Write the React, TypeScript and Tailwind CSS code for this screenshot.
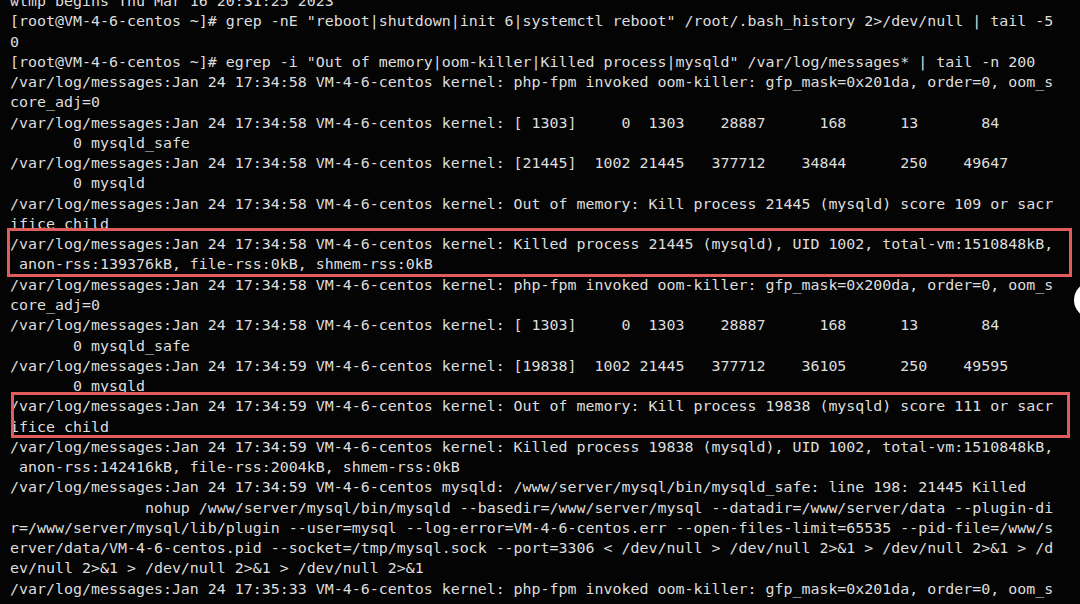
const lines = [
  'wtmp begins Thu Mar 16 20:31:25 2023',
  '[root@VM-4-6-centos ~]# grep -nE "reboot|shutdown|init 6|systemctl reboot" /root/.bash_history 2>/dev/null | tail -5',
  '0',
  '[root@VM-4-6-centos ~]# egrep -i "Out of memory|oom-killer|Killed process|mysqld" /var/log/messages* | tail -n 200',
  '/var/log/messages:Jan 24 17:34:58 VM-4-6-centos kernel: php-fpm invoked oom-killer: gfp_mask=0x201da, order=0, oom_s',
  'core_adj=0',
  '/var/log/messages:Jan 24 17:34:58 VM-4-6-centos kernel: [ 1303]     0  1303    28887      168      13       84',
  '       0 mysqld_safe',
  '/var/log/messages:Jan 24 17:34:58 VM-4-6-centos kernel: [21445]  1002 21445   377712    34844      250    49647',
  '       0 mysqld',
  '/var/log/messages:Jan 24 17:34:58 VM-4-6-centos kernel: Out of memory: Kill process 21445 (mysqld) score 109 or sacr',
  'ifice child',
  '/var/log/messages:Jan 24 17:34:58 VM-4-6-centos kernel: Killed process 21445 (mysqld), UID 1002, total-vm:1510848kB,',
  ' anon-rss:139376kB, file-rss:0kB, shmem-rss:0kB',
  '/var/log/messages:Jan 24 17:34:58 VM-4-6-centos kernel: php-fpm invoked oom-killer: gfp_mask=0x200da, order=0, oom_s',
  'core_adj=0',
  '/var/log/messages:Jan 24 17:34:58 VM-4-6-centos kernel: [ 1303]     0  1303    28887      168      13       84',
  '       0 mysqld_safe',
  '/var/log/messages:Jan 24 17:34:59 VM-4-6-centos kernel: [19838]  1002 21445   377712    36105      250    49595',
  '       0 mysqld',
  '/var/log/messages:Jan 24 17:34:59 VM-4-6-centos kernel: Out of memory: Kill process 19838 (mysqld) score 111 or sacr',
  'ifice child',
  '/var/log/messages:Jan 24 17:34:59 VM-4-6-centos kernel: Killed process 19838 (mysqld), UID 1002, total-vm:1510848kB,',
  ' anon-rss:142416kB, file-rss:2004kB, shmem-rss:0kB',
  '/var/log/messages:Jan 24 17:34:59 VM-4-6-centos mysqld: /www/server/mysql/bin/mysqld_safe: line 198: 21445 Killed',
  '               nohup /www/server/mysql/bin/mysqld --basedir=/www/server/mysql --datadir=/www/server/data --plugin-di',
  'r=/www/server/mysql/lib/plugin --user=mysql --log-error=VM-4-6-centos.err --open-files-limit=65535 --pid-file=/www/s',
  'erver/data/VM-4-6-centos.pid --socket=/tmp/mysql.sock --port=3306 < /dev/null > /dev/null 2>&1 > /dev/null 2>&1 > /d',
  'ev/null 2>&1 > /dev/null 2>&1 > /dev/null 2>&1',
  '/var/log/messages:Jan 24 17:35:33 VM-4-6-centos kernel: php-fpm invoked oom-killer: gfp_mask=0x201da, order=0, oom_s',
]

export default function App() {
  return (
    <div className="relative w-[1080px] h-[604px] overflow-hidden bg-[#040404]">
      {/* terminal output */}
      <div className="-mt-[9px] pl-[10px] font-['DejaVu_Sans_Mono',monospace] text-[14.95px] leading-[20.28px] text-[#dedede]">
        {lines.map((line, i) => (
          <div key={i} className="whitespace-pre h-[20.28px]">
            {line}
          </div>
        ))}
      </div>

      {/* highlight boxes */}
      <div className="absolute left-[7px] top-[228px] w-[1065px] h-[49px] border-[3px] border-[#e25c5c]" />
      <div className="absolute left-[11px] top-[392px] w-[1059px] h-[46px] border-[3px] border-[#e25c5c]" />

      {/* floating button, cut off by the edge */}
      <div className="absolute left-[1074px] top-[282px] w-[36px] h-[36px] rounded-full bg-white" />
    </div>
  )
}
